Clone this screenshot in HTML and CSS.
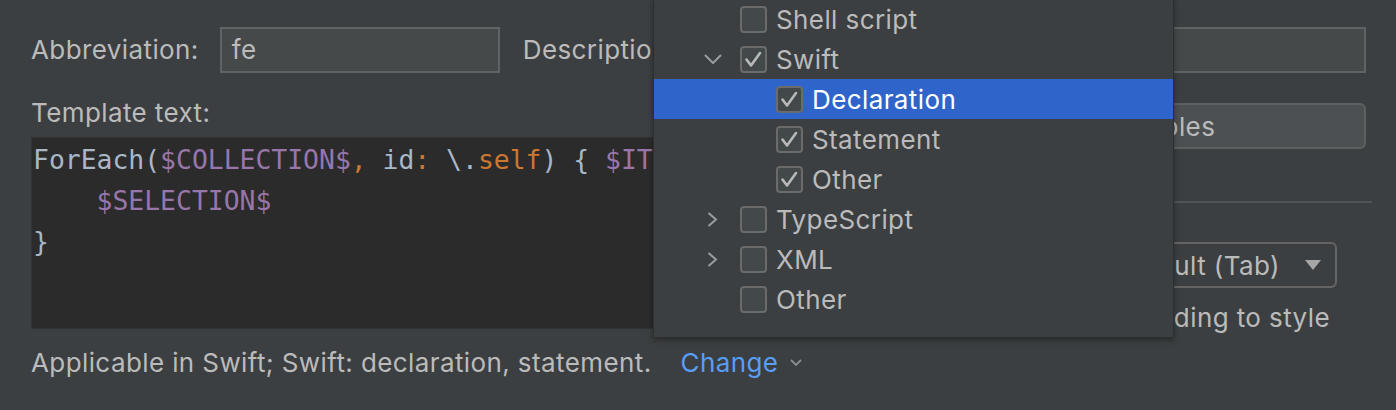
FILE: index.html
```html
<!DOCTYPE html>
<html lang="en">
<head>
  <meta charset="utf-8">
  <title>Edit Live Template</title>
  <link rel="stylesheet" href="styles.css">
</head>
<body>
  <div class="dialog">
    <div class="top-row">
      <label class="field-label">Abbreviation:</label>
      <div class="text-input abbr-input">fe</div>
      <label class="field-label desc-label">Description:</label>
      <div class="text-input desc-input"></div>
    </div>

    <div class="body">
      <div class="template-col">
        <div class="field-label template-label">Template text:</div>
        <pre class="editor">ForEach(<span class="c-var">$COLLECTION$</span><span class="c-kw">,</span> id<span class="c-kw">:</span> \.<span class="c-kw">self</span>) { <span class="c-var">$ITEM$</span> <span class="c-kw">in</span>
    <span class="c-var">$SELECTION$</span>
}</pre>
      </div>

      <div class="side-col">
        <button class="btn">Edit variables</button>
        <div class="options-title">
          <span>Options</span>
          <div class="separator"></div>
        </div>
        <div class="expand-row">
          <span class="field-label">Expand with</span>
          <div class="combo">
            <span>Default (Tab)</span>
            <svg class="combo-arrow" width="16" height="10" viewBox="0 0 16 10"><path d="M0 0 L16 0 L8 10 Z" fill="#a6a6a6"/></svg>
          </div>
        </div>
        <div class="option-row">
          <span class="checkbox"></span>
          <span>Reformat according to style</span>
        </div>
      </div>
    </div>

    <div class="context-row">
      <span>Applicable in Swift; Swift: declaration, statement.</span>
      <a class="change-link">Change</a>
      <svg class="change-chevron" width="12" height="8" viewBox="0 0 12 8"><path d="M1 1 L6 6 L11 1" fill="none" stroke="#8a8d90" stroke-width="1.8"/></svg>
    </div>

    <!-- context chooser popup -->
    <div class="popup">
      <div class="tree-row level-1">
        <span class="toggle"></span>
        <span class="checkbox"></span>
        <span>Shell script</span>
      </div>
      <div class="tree-row level-1">
        <span class="toggle">
          <svg width="18" height="10" viewBox="0 0 18 10"><path d="M1 1 L9 9 L17 1" fill="none" stroke="#9a9da0" stroke-width="2"/></svg>
        </span>
        <span class="checkbox checked"><svg width="27" height="27" viewBox="0 0 27 27"><path d="M6.5 13.5 L11 19.5 L20 7" fill="none" stroke="#b9b9b9" stroke-width="2.6" stroke-linecap="round" stroke-linejoin="round"/></svg></span>
        <span>Swift</span>
      </div>
      <div class="tree-row level-2 selected">
        <span class="toggle"></span>
        <span class="checkbox checked"><svg width="27" height="27" viewBox="0 0 27 27"><path d="M6.5 13.5 L11 19.5 L20 7" fill="none" stroke="#b9b9b9" stroke-width="2.6" stroke-linecap="round" stroke-linejoin="round"/></svg></span>
        <span>Declaration</span>
      </div>
      <div class="tree-row level-2">
        <span class="toggle"></span>
        <span class="checkbox checked"><svg width="27" height="27" viewBox="0 0 27 27"><path d="M6.5 13.5 L11 19.5 L20 7" fill="none" stroke="#b9b9b9" stroke-width="2.6" stroke-linecap="round" stroke-linejoin="round"/></svg></span>
        <span>Statement</span>
      </div>
      <div class="tree-row level-2">
        <span class="toggle"></span>
        <span class="checkbox checked"><svg width="27" height="27" viewBox="0 0 27 27"><path d="M6.5 13.5 L11 19.5 L20 7" fill="none" stroke="#b9b9b9" stroke-width="2.6" stroke-linecap="round" stroke-linejoin="round"/></svg></span>
        <span>Other</span>
      </div>
      <div class="tree-row level-1">
        <span class="toggle collapsed">
          <svg width="11" height="15" viewBox="0 0 11 15"><path d="M1.5 1 L9 7.5 L1.5 14" fill="none" stroke="#9a9da0" stroke-width="2"/></svg>
        </span>
        <span class="checkbox"></span>
        <span>TypeScript</span>
      </div>
      <div class="tree-row level-1">
        <span class="toggle collapsed">
          <svg width="11" height="15" viewBox="0 0 11 15"><path d="M1.5 1 L9 7.5 L1.5 14" fill="none" stroke="#9a9da0" stroke-width="2"/></svg>
        </span>
        <span class="checkbox"></span>
        <span>XML</span>
      </div>
      <div class="tree-row level-1">
        <span class="toggle"></span>
        <span class="checkbox"></span>
        <span>Other</span>
      </div>
    </div>
  </div>
</body>
</html>
```

FILE: styles.css
```css
:root {
  --ui-font: Inter, "Noto Sans", sans-serif;
  --code-font: "DejaVu Sans Mono", "Liberation Mono", monospace;
  --panel-bg: #3c3f41;
  --input-bg: #45494a;
  --input-border: #5f6365;
  --editor-bg: #2b2b2b;
  --text: #bbbbbb;
  --selection: #2f65ca;
  --link: #589df6;
}

* {
  box-sizing: border-box;
  margin: 0;
  padding: 0;
}

body {
  font-family: var(--ui-font);
  font-size: 26px;
  letter-spacing: 0.4px;
  color: var(--text);
  background-color: var(--panel-bg);
  width: 1396px;
  height: 410px;
  overflow: hidden;
}

.dialog {
  position: relative;
  height: 410px;
  padding: 27px 30px 0 31px;
}

.field-label {
  white-space: nowrap;
  line-height: 30px;
}

/* top row: abbreviation + description */
.top-row {
  display: flex;
  align-items: center;
  height: 46px;
}

.text-input {
  height: 46px;
  line-height: 42px;
  padding: 0 10px;
  background-color: var(--input-bg);
  border: 2px solid var(--input-border);
}

.abbr-input {
  width: 280px;
  margin-left: 21px;
}

.desc-label {
  margin-left: 23px;
}

.desc-input {
  flex: 1;
  margin-left: 14px;
}

/* template editor + side options */
.body {
  display: grid;
  grid-template-columns: 839px minmax(0, 1fr);
  column-gap: 24px;
  margin-top: 30px;
}

.template-label {
  line-height: 20px;
  margin-bottom: 14px;
}

.editor {
  height: 192px;
  padding: 1px 1px;
  font-family: var(--code-font);
  font-size: 26.4px;
  letter-spacing: 0;
  line-height: 41px;
  color: #a9b7c6;
  background-color: var(--editor-bg);
  border: 1px solid #313335;
  overflow: hidden;
}

.c-var {
  color: #9876aa;
}

.c-kw {
  color: #cc7832;
}

.side-col {
  display: flex;
  flex-direction: column;
}

.btn {
  height: 46px;
  font-family: var(--ui-font);
  font-size: 26px;
  letter-spacing: 0.4px;
  color: var(--text);
  background-color: #4c5052;
  border: 2px solid #5e6060;
  border-radius: 6px;
}

.options-title {
  display: flex;
  align-items: center;
  gap: 12px;
  height: 30px;
  margin-top: 38px;
  margin-right: -6px;
}

.separator {
  flex: 1;
  height: 2px;
  background-color: #515355;
}

.expand-row {
  display: flex;
  align-items: center;
  margin-top: 25px;
  margin-right: 29px;
}

.combo {
  display: flex;
  align-items: center;
  flex: none;
  width: 270px;
  height: 46px;
  margin-left: auto;
  padding: 0 14px 0 46px;
  border: 2px solid #646464;
  border-radius: 6px;
}

.combo-arrow {
  margin-left: auto;
}

.option-row {
  display: flex;
  align-items: center;
  justify-content: flex-end;
  gap: 10px;
  height: 30px;
  margin-top: 14px;
  margin-right: 36px;
}

/* bottom context line */
.context-row {
  display: flex;
  align-items: center;
  height: 30px;
  margin-top: 15px;
  white-space: nowrap;
}

.change-link {
  color: var(--link);
  margin-left: 29px;
}

.change-chevron {
  margin-left: 12px;
  margin-top: 2px;
}

/* checkboxes */
.checkbox {
  display: inline-flex;
  flex: none;
  width: 27px;
  height: 27px;
  background-color: #43494a;
  border: 2px solid #6b6b6b;
  border-radius: 4px;
  overflow: hidden;
}

.checkbox svg {
  margin: -2px;
}

/* context popup */
.popup {
  position: absolute;
  left: 653px;
  top: -2px;
  width: 521px;
  height: 340px;
  padding-bottom: 20px;
  background-color: var(--panel-bg);
  border: 1px solid #2c2e30;
  box-shadow: 0 2px 6px rgba(0, 0, 0, 0.35);
}

.tree-row {
  display: flex;
  align-items: center;
  height: 40px;
  white-space: nowrap;
}

.tree-row.level-1 {
  padding-left: 46px;
}

.tree-row.level-2 {
  padding-left: 82px;
}

.tree-row .checkbox {
  margin-right: 9px;
}

.toggle {
  display: flex;
  align-items: center;
  flex: none;
  width: 40px;
  height: 40px;
  padding-left: 4px;
}

.toggle.collapsed {
  padding-left: 7px;
}

.tree-row.selected {
  background-color: var(--selection);
  color: #ffffff;
}
```
